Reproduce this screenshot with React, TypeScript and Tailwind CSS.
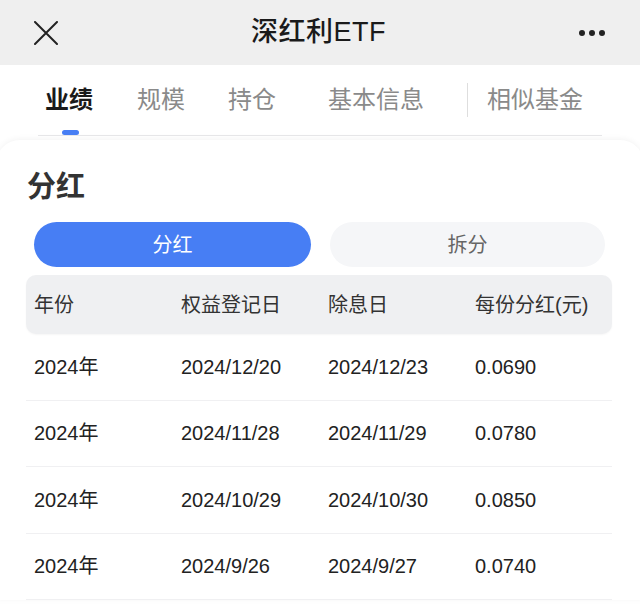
const rows = [
  ['2024年', '2024/12/20', '2024/12/23', '0.0690'],
  ['2024年', '2024/11/28', '2024/11/29', '0.0780'],
  ['2024年', '2024/10/29', '2024/10/30', '0.0850'],
  ['2024年', '2024/9/26', '2024/9/27', '0.0740'],
]

const font = { fontFamily: '"Liberation Sans", "Noto Sans CJK SC", sans-serif' }

export default function App() {
  return (
    <div className="w-[640px] h-[609px] overflow-hidden bg-white text-[#222]" style={font}>
      {/* Top bar */}
      <div className="h-[65px] bg-[#efefef] flex items-center justify-between pl-[34px] pr-[33px]">
        <svg width="24" height="24" viewBox="0 0 24 24" className="text-[#222]">
          <path d="M1 1L23 23M23 1L1 23" stroke="currentColor" strokeWidth="2" strokeLinecap="round" />
        </svg>
        <div className="text-[27px] font-medium tracking-[0.5px] text-[#1a1a1a]">深红利ETF</div>
        <div className="flex gap-[4px] items-center pr-[2px]">
          <span className="w-[6px] h-[6px] rounded-full bg-[#222]" />
          <span className="w-[6px] h-[6px] rounded-full bg-[#222]" />
          <span className="w-[6px] h-[6px] rounded-full bg-[#222]" />
        </div>
      </div>

      {/* Tabs */}
      <div className="px-[38px] bg-white">
        <div className="relative h-[71px] flex items-center border-b border-[#e6e6e8] text-[24px] text-[#8a8a8a]">
          <div className="relative ml-[7px] font-bold text-[#1a1a1a]">
            业绩
            <span className="absolute left-[17px] top-[48px] w-[17px] h-[5px] rounded-full bg-[#477ef4]" />
          </div>
          <div className="ml-[44px]">规模</div>
          <div className="ml-[43px]">持仓</div>
          <div className="ml-[52px]">基本信息</div>
          <div className="ml-[43px] h-[34px] w-px bg-[#dedede]" />
          <div className="ml-[19px]">相似基金</div>
        </div>
      </div>

      {/* Card */}
      <div className="mt-[4px] mx-[-4px] rounded-t-[24px] bg-white shadow-[0_-1px_6px_rgba(0,0,0,0.05)] pt-[29px] px-[30px]">
        <div className="ml-[1px] text-[29px] font-bold text-[#333] leading-[36px]">分红</div>

        <div className="mt-[17px] flex gap-[19px] px-[8px]">
          <div className="w-[277px] h-[45px] rounded-full bg-[#477ef4] text-white text-[20px] flex items-center justify-center">
            分红
          </div>
          <div className="w-[275px] h-[45px] rounded-full bg-[#f5f6f8] text-[#666] text-[20px] flex items-center justify-center">
            拆分
          </div>
        </div>

        <div className="mt-[8px] w-[586px]">
          <div className="h-[59px] rounded-[10px] bg-[#eff0f2] grid grid-cols-[147px_147px_147px_137px] items-center pl-[8px] text-[20px] text-[#333] shadow-[0_1px_2px_rgba(0,0,0,0.04)]">
            <div>年份</div>
            <div>权益登记日</div>
            <div>除息日</div>
            <div>每份分红(元)</div>
          </div>
          {rows.map((r, i) => (
            <div
              key={i}
              className="h-[66.5px] grid grid-cols-[147px_147px_147px_137px] items-center pl-[8px] text-[20px] text-[#222] border-b border-[#f0f0f2]"
            >
              {r.map((c, j) => (
                <div key={j}>{c}</div>
              ))}
            </div>
          ))}
        </div>
      </div>
    </div>
  )
}
